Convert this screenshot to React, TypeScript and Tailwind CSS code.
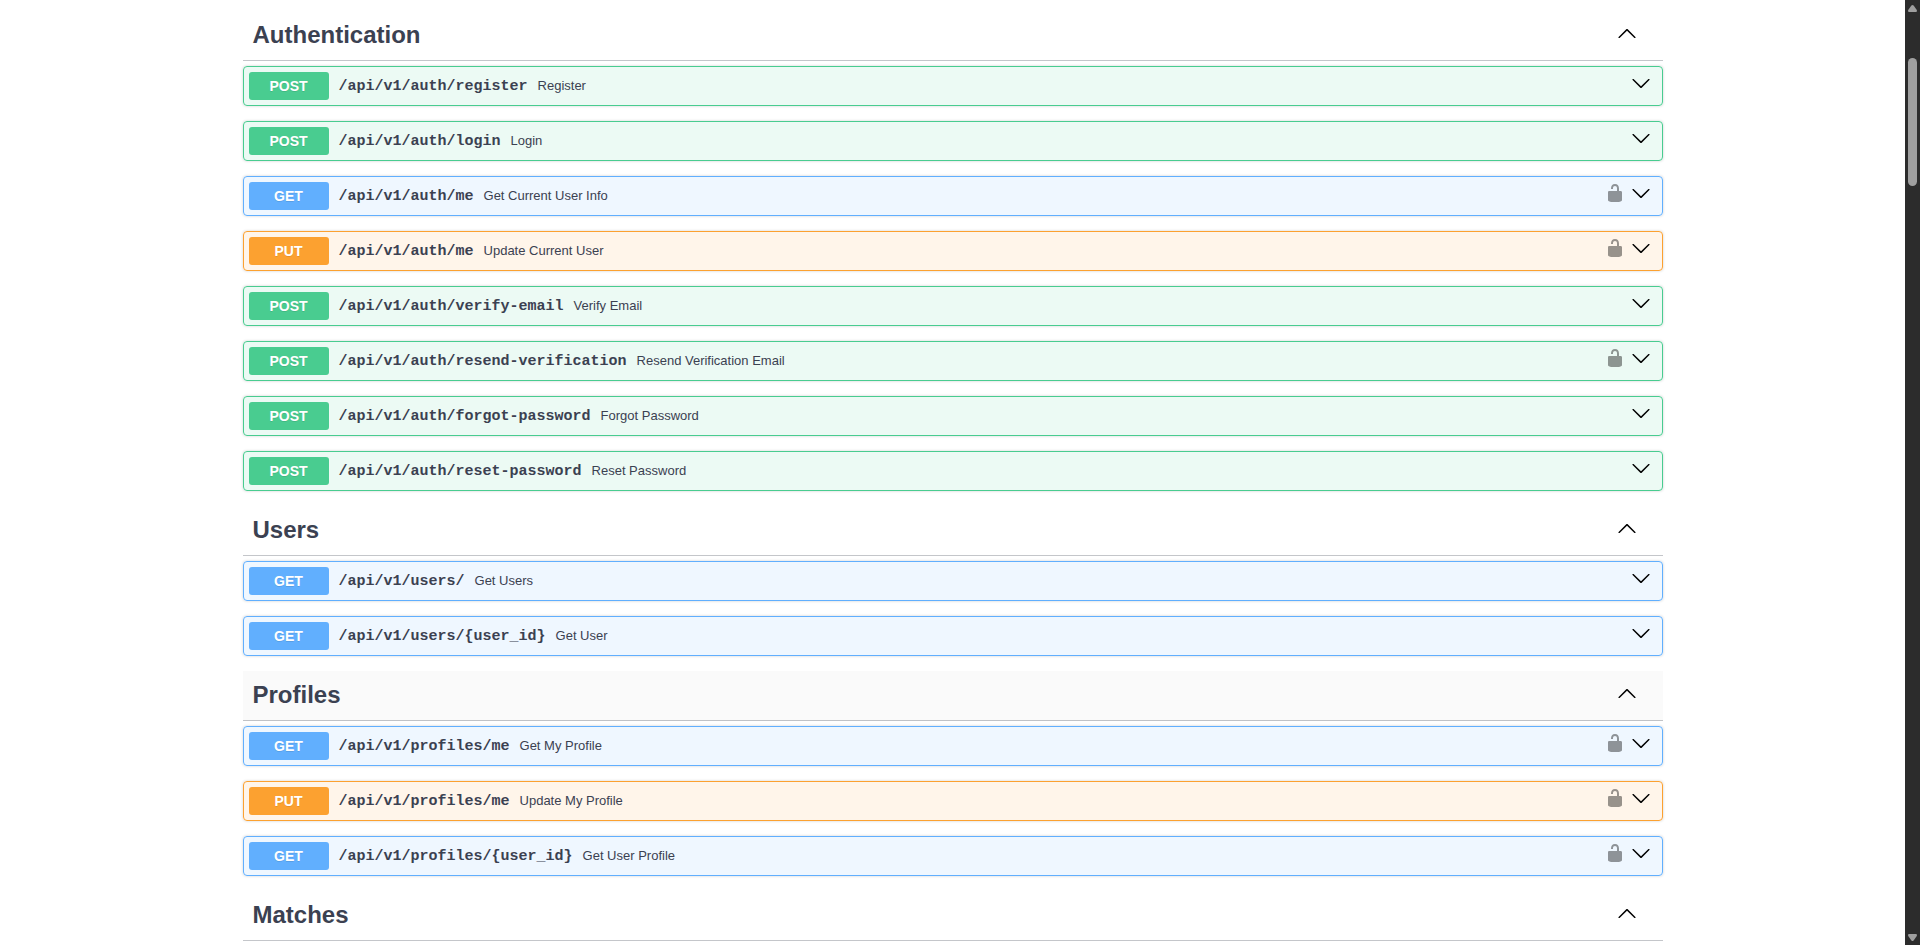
import { useState } from "react";
import clsx from "clsx";

type Method = "POST" | "GET" | "PUT";

type Operation = {
  method: Method;
  path: string;
  summary: string;
  locked?: boolean;
};

type Tag = {
  name: string;
  active?: boolean;
  operations: Operation[];
};

const tags: Tag[] = [
  {
    name: "Authentication",
    operations: [
      { method: "POST", path: "/api/v1/auth/register", summary: "Register" },
      { method: "POST", path: "/api/v1/auth/login", summary: "Login" },
      { method: "GET", path: "/api/v1/auth/me", summary: "Get Current User Info", locked: true },
      { method: "PUT", path: "/api/v1/auth/me", summary: "Update Current User", locked: true },
      { method: "POST", path: "/api/v1/auth/verify-email", summary: "Verify Email" },
      {
        method: "POST",
        path: "/api/v1/auth/resend-verification",
        summary: "Resend Verification Email",
        locked: true,
      },
      { method: "POST", path: "/api/v1/auth/forgot-password", summary: "Forgot Password" },
      { method: "POST", path: "/api/v1/auth/reset-password", summary: "Reset Password" },
    ],
  },
  {
    name: "Users",
    operations: [
      { method: "GET", path: "/api/v1/users/", summary: "Get Users" },
      { method: "GET", path: "/api/v1/users/{user_id}", summary: "Get User" },
    ],
  },
  {
    name: "Profiles",
    active: true,
    operations: [
      { method: "GET", path: "/api/v1/profiles/me", summary: "Get My Profile", locked: true },
      { method: "PUT", path: "/api/v1/profiles/me", summary: "Update My Profile", locked: true },
      { method: "GET", path: "/api/v1/profiles/{user_id}", summary: "Get User Profile", locked: true },
    ],
  },
  { name: "Matches", operations: [] },
];

const rowStyles: Record<Method, string> = {
  POST: "border-[#49cc90] bg-[#49cc90]/10",
  GET: "border-[#61affe] bg-[#61affe]/10",
  PUT: "border-[#fca130] bg-[#fca130]/10",
};

const badgeStyles: Record<Method, string> = {
  POST: "bg-[#49cc90]",
  GET: "bg-[#61affe]",
  PUT: "bg-[#fca130]",
};

function ArrowUp() {
  return (
    <svg viewBox="0 0 20 20" className="h-5 w-5" fill="currentColor" aria-hidden="true">
      <path d="M17.418 14.908c.272.268.709.268.979 0s.271-.701 0-.969l-7.908-7.83c-.27-.268-.707-.268-.979 0l-7.908 7.83c-.27.268-.27.701 0 .969s.709.268.979 0L10 7.767z" />
    </svg>
  );
}

function ArrowDown() {
  return (
    <svg viewBox="0 0 20 20" className="h-5 w-5" fill="currentColor" aria-hidden="true">
      <path d="M17.418 6.109c.272-.268.709-.268.979 0s.271.701 0 .969l-7.908 7.83c-.27.268-.707.268-.979 0l-7.908-7.83c-.27-.268-.27-.701 0-.969s.709-.268.979 0L10 13.25z" />
    </svg>
  );
}

function Unlocked() {
  return (
    <svg viewBox="0 0 20 20" className="h-5 w-5" fill="currentColor" aria-hidden="true">
      <path d="M15.8 8H14V5.6C14 2.703 12.665 1 10 1 7.334 1 6 2.703 6 5.6V6h2v-.801C8 3.754 8.797 3 10 3c1.203 0 2 .754 2 2.199V8H4c-.553 0-1 .646-1 1.199V17c0 .549.428 1.139.951 1.307l1.197.387C5.672 18.861 6.55 19 7.1 19h5.8c.549 0 1.428-.139 1.951-.307l1.196-.387c.524-.167.953-.757.953-1.306V9.199C17 8.646 16.352 8 15.8 8z" />
    </svg>
  );
}

function OperationRow({ method, path, summary, locked }: Operation) {
  return (
    <div
      className={clsx(
        "mb-[15px] flex items-center rounded border p-[5px] shadow-[0_0_3px_rgba(0,0,0,0.19)]",
        rowStyles[method]
      )}
    >
      <span
        className={clsx(
          "w-20 shrink-0 rounded-[3px] text-center text-sm leading-7 font-bold text-white [text-shadow:0_1px_0_rgba(0,0,0,0.1)]",
          badgeStyles[method]
        )}
      >
        {method}
      </span>
      <a
        href={`#${path}`}
        className="px-2.5 pt-0.5 font-['Liberation_Mono',monospace] text-[15px] leading-5 font-bold"
      >
        {path}
      </a>
      <span className="grow text-[13px] leading-5">{summary}</span>
      <div className="flex gap-1.5 self-start px-1.5 pt-px text-black">
        {locked && (
          <button type="button" aria-label="authorization button unlocked" className="opacity-40">
            <Unlocked />
          </button>
        )}
        <button type="button" aria-label={`${method} ${path}`}>
          <ArrowDown />
        </button>
      </div>
    </div>
  );
}

function TagSection({ name, active, operations }: Tag) {
  const [open, setOpen] = useState(true);

  return (
    <section>
      <div
        className={clsx(
          "mb-[5px] flex items-start justify-between border-b border-[#3b4151]/30 pt-2.5 pr-[26px] pb-3 pl-2.5 hover:bg-black/2",
          active && "bg-black/2"
        )}
      >
        <h3 className="text-2xl leading-[27px] font-bold">{name}</h3>
        <button
          type="button"
          aria-label={`Toggle ${name}`}
          aria-expanded={open}
          onClick={() => setOpen(!open)}
          className="pt-0.5 text-black"
        >
          {open ? <ArrowUp /> : <ArrowDown />}
        </button>
      </div>
      {open && operations.map((op) => <OperationRow key={op.method + op.path} {...op} />)}
    </section>
  );
}

function Scrollbar() {
  return (
    <div className="flex w-[15px] shrink-0 flex-col items-center bg-[#2c2c2c] py-1 text-[#9f9f9f]" aria-hidden="true">
      <svg viewBox="0 0 9 8" className="h-2 w-[9px]" fill="currentColor">
        <path d="M3.4 1.6Q4.5.2 5.6 1.6L8.8 6Q9.3 8 8 8H1Q-.3 8 .2 6z" />
      </svg>
      <div className="w-[9px] grow pt-[46px]">
        <div className="h-32 rounded-full bg-[#9f9f9f]" />
      </div>
      <svg viewBox="0 0 9 8" className="h-2 w-[9px]" fill="currentColor">
        <path d="M3.4 7.4Q4.5 8.8 5.6 7.4L8.8 3Q9.3 1 8 1H1Q-.3 1 .2 3z" />
      </svg>
    </div>
  );
}

export default function App() {
  return (
    <div className="flex h-screen overflow-hidden bg-white font-['Liberation_Sans',Arial,sans-serif] text-[#3b4151]">
      <main className="min-w-0 grow overflow-hidden">
        <div className="mx-auto max-w-[1460px] px-5 pt-[11px]">
          {tags.map((tag) => (
            <TagSection key={tag.name} {...tag} />
          ))}
        </div>
      </main>
      <Scrollbar />
    </div>
  );
}
